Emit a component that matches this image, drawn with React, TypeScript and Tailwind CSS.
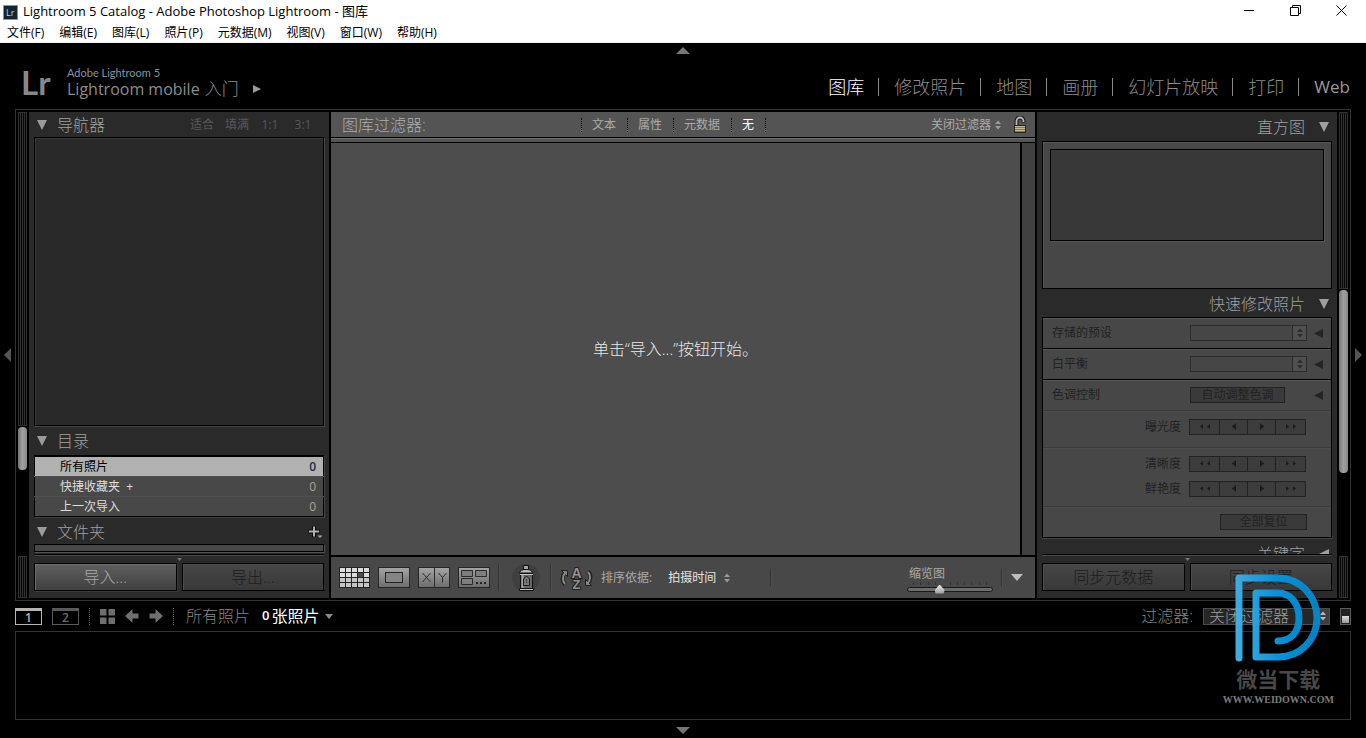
import React from "react";

const stripes =
  "w-[9px] bg-[repeating-linear-gradient(90deg,#303030_0_1px,#080808_1px_2px)] border-y border-[#303030]";

type Dir = "up" | "down" | "left" | "right";

function Tri({ dir, w, h, color = "#8f8f8f" }: { dir: Dir; w: number; h: number; color?: string }) {
  const points: Record<Dir, string> = {
    up: `0,${h} ${w},${h} ${w / 2},0`,
    down: `0,0 ${w},0 ${w / 2},${h}`,
    left: `${w},0 ${w},${h} 0,${h / 2}`,
    right: `0,0 0,${h} ${w},${h / 2}`,
  };
  return (
    <svg width={w} height={h} viewBox={`0 0 ${w} ${h}`} className="shrink-0" aria-hidden="true">
      <polygon points={points[dir]} fill={color} />
    </svg>
  );
}

function UpDown({ color = "#9a9a9a" }: { color?: string }) {
  return (
    <svg width="6" height="10" viewBox="0 0 6 10" className="shrink-0" aria-hidden="true">
      <path d="M0 4L3 0.5L6 4ZM0 6L3 9.5L6 6Z" fill={color} />
    </svg>
  );
}

function Dots({ className = "h-3.5 border-black" }: { className?: string }) {
  return <span className={`w-px border-l border-dotted ${className}`} />;
}

function TitleBar() {
  return (
    <header className="flex h-6 shrink-0 items-center bg-white pr-0.5 pl-[3px] text-black">
      <svg width="15" height="15" viewBox="0 0 15 15" aria-hidden="true">
        <rect width="15" height="15" fill="#7f98a8" />
        <rect x="1" y="1" width="13" height="13" fill="#14242f" />
        <text x="3" y="11" fontSize="9" fill="#b9d3e2" fontFamily="Open Sans, sans-serif">Lr</text>
      </svg>
      <h1 className="ml-[5px] flex-1 truncate text-[13px]">Lightroom 5 Catalog - Adobe Photoshop Lightroom - 图库</h1>
      <button aria-label="最小化" className="flex h-full w-[46px] items-center justify-center pb-1">
        <svg width="11" height="11" viewBox="0 0 11 11"><path d="M0 5.500H10" stroke="#000" /></svg>
      </button>
      <button aria-label="还原" className="flex h-full w-[46px] items-center justify-center pb-1">
        <svg width="11" height="11" viewBox="0 0 11 11" fill="none" stroke="#000">
          <path d="M0.500 2.500H8.500V10.500H0.500ZM2.500 2.500V0.500H10.500V8.500H8.500" />
        </svg>
      </button>
      <button aria-label="关闭" className="flex h-full w-[46px] items-center justify-center pb-1">
        <svg width="11" height="11" viewBox="0 0 11 11" stroke="#000"><path d="M0.500 0.500L10.500 10.500M10.500 0.500L0.500 10.500" /></svg>
      </button>
    </header>
  );
}

const menus = ["文件(F)", "编辑(E)", "图库(L)", "照片(P)", "元数据(M)", "视图(V)", "窗口(W)", "帮助(H)"];

function MenuBar() {
  return (
    <nav className="flex h-[19px] shrink-0 items-center gap-[15px] border-b border-[#f0f0f0] bg-white pl-[7px] text-[12px] leading-4 text-black">
      {menus.map((m) => (
        <button key={m}>{m}</button>
      ))}
    </nav>
  );
}

const modules = ["图库", "修改照片", "地图", "画册", "幻灯片放映", "打印", "Web"];

function ModulePicker() {
  return (
    <div className="flex h-[66px] shrink-0 flex-col text-[#8c8c8c]">
      <button aria-label="隐藏模块选取器" className="mt-1 flex h-2 justify-center">
        <Tri dir="up" w={14} h={7} color="#757575" />
      </button>
      <div className="flex flex-1 items-center justify-between pr-4 pl-[21px]">
        <div className="flex items-center">
          <span className="w-[46px] font-[Lato,sans-serif] text-[33px] leading-8 font-bold text-[#888]">Lr</span>
          <div>
            <p className="font-[Lato,sans-serif] text-[11px] leading-[13px] text-[#8295a3]">Adobe Lightroom 5</p>
            <button className="flex items-center text-[16px] leading-5">
              <span>Lightroom mobile</span>
              <span className="ml-[5px] text-[17px] font-light">入门</span>
              <span className="ml-3.5"><Tri dir="right" w={8} h={8} color="#999" /></span>
            </button>
          </div>
        </div>
        <nav className="flex items-center pt-2.5 text-[18px] leading-6 font-light">
          {modules.map((m, i) => (
            <React.Fragment key={m}>
              {i > 0 && <span className="mr-[15px] ml-3.5 h-[18px] w-px bg-[#8a8a8a]" />}
              <a href="#" className={i === 0 ? "text-white" : m === "Web" ? "text-[17px] font-normal text-[#999]" : ""}>{m}</a>
            </React.Fragment>
          ))}
        </nav>
      </div>
    </div>
  );
}

function LeftPanel() {
  const rows = [
    { name: "所有照片", n: 0 },
    { name: "快捷收藏夹  +", n: 0 },
    { name: "上一次导入", n: 0 },
  ];
  return (
    <aside className="flex w-[300px] shrink-0 flex-col bg-[#2a2a2a] pr-[5px] pl-[5px]">
      <div className="flex h-[25px] shrink-0 items-center pr-[9px] pl-[3px] text-[12px] text-[#585858]">
        <Tri dir="down" w={10} h={10} color="#9b9b9b" />
        <h2 className="ml-2.5 flex-1 text-[16px] font-light text-[#a0a0a0]">导航器</h2>
        <div className="flex gap-[11px]">
          <button>适合</button>
          <button>填满</button>
          <button className="w-5">1:1</button>
          <button className="w-6">3:1</button>
        </div>
      </div>
      <div className="min-h-0 flex-1 border border-black bg-[#292929] shadow-[1px_1px_0_#444,inset_1px_1px_0_#373737]" />
      <div className="flex h-[29px] shrink-0 items-center pt-px pl-[3px]">
        <Tri dir="down" w={10} h={10} color="#9b9b9b" />
        <h2 className="ml-2.5 text-[16px] font-light text-[#a0a0a0]">目录</h2>
      </div>
      <table className="w-full shrink-0 border-collapse border border-t-2 border-black bg-[#484848] text-[12px] leading-[19px] shadow-[1px_1px_0_#444]">
        <tbody>
          {rows.map((r, i) => (
            <tr key={r.name} className={i === 0 ? "bg-[#b1b1b1] text-black" : "border-t border-[#505050] text-[#dedede]"}>
              <td className="whitespace-pre pl-[25px]">{r.name}</td>
              <td className={`pr-[7px] text-right ${i === 0 ? "font-semibold text-[#13304c]" : "text-[#aaa28f]"}`}>{r.n}</td>
            </tr>
          ))}
        </tbody>
      </table>
      <div className="flex h-[27px] shrink-0 items-center pt-0.5 pl-[3px]">
        <Tri dir="down" w={10} h={10} color="#9b9b9b" />
        <h2 className="ml-2.5 flex-1 text-[16px] font-light text-[#a0a0a0]">文件夹</h2>
        <button aria-label="添加文件夹">
          <svg width="17" height="14" viewBox="0 0 17 14">
            <path d="M7 1V12M1.500 6.500H12.500" stroke="#0a0a0a" strokeWidth="4" />
            <path d="M7 1.500V11.500M2 6.500H12" stroke="#b0b0b0" strokeWidth="2" />
            <path d="M10.500 10.500H15.500L13 13Z" fill="#aaa" />
          </svg>
        </button>
      </div>
      <div className="h-2 shrink-0 border border-black bg-[#484848] shadow-[1px_1px_0_#505050]" />
      <PanelFoot>
        <button className="flex-1 border border-black bg-linear-to-b from-[#606060] to-[#404040] text-[#a8a8a8] shadow-[inset_1px_1px_0_#6d6d6d,1px_1px_0_#3b3b3b]">导入...</button>
        <button className="flex-1 border border-black bg-linear-to-b from-[#474747] to-[#383838] text-[#1c1c1c] shadow-[inset_1px_1px_0_#4c4c4c]">导出...</button>
      </PanelFoot>
    </aside>
  );
}

function PanelFoot({ children }: { children: React.ReactNode }) {
  return (
    <div className="mt-0.5 shrink-0">
      <div className="h-0.5 border-t border-b border-t-black border-b-[#484848]" />
      <div className="flex h-[7px] items-center justify-center"><Tri dir="down" w={5} h={3} color="#777" /></div>
      <div className="mb-[7px] flex h-7 gap-[5px] text-[16px] leading-6 font-light">{children}</div>
    </div>
  );
}

function LockIcon() {
  return (
    <svg width="14" height="18" viewBox="0 0 14 18" aria-hidden="true">
      <path d="M3.500 9V5A3.500 3.500 0 0 1 10.500 5V6.500" fill="none" stroke="#1d1d1d" strokeWidth="4" />
      <path d="M3.500 9V5A3.500 3.500 0 0 1 10.500 5V6" fill="none" stroke="#b9b9b9" strokeWidth="1.800" />
      <rect x="1" y="9" width="12" height="8" fill="#29251b" />
      <path d="M2 10.500H12M2 12.500H12M2 14.500H12" stroke="#c5b98f" />
      <path d="M2 11.500H12M2 13.500H12M2 15.500H12" stroke="#857b5c" />
    </svg>
  );
}

function FilterBar() {
  const items = ["文本", "属性", "元数据", "无"];
  return (
    <div className="flex h-[25px] shrink-0 items-center bg-[#545454] pr-2 pl-[11px] text-[12px] text-[#aaa]">
      <h2 className="flex-1 text-[16px] font-light text-[#acacac]">图库过滤器:</h2>
      <div className="mr-[22px] flex items-center gap-2.5">
        <Dots />
        {items.map((t) => (
          <React.Fragment key={t}>
            <button className={t === "无" ? "mr-px text-white" : "mr-px"}>{t}</button>
            <Dots />
          </React.Fragment>
        ))}
      </div>
      <div className="flex flex-1 items-center justify-end">
        <button className="flex items-center gap-1">关闭过滤器<UpDown /></button>
        <button aria-label="锁定过滤器" className="ml-3"><LockIcon /></button>
      </div>
    </div>
  );
}

function ViewIcon({ kind }: { kind: "grid" | "loupe" | "compare" | "survey" }) {
  if (kind === "grid") {
    const cells: React.ReactNode[] = [];
    for (let r = 0; r < 4; r++)
      for (let c = 0; c < 5; c++)
        cells.push(<rect key={`${r}-${c}`} x={1 + c * 6} y={1 + r * 5} width="5" height="4" fill={r === 1 && c === 3 ? "#4c4c4c" : r < 2 ? "#dcdcdc" : "#c4c4c4"} />);
    return <svg width="31" height="21" viewBox="0 0 31 21"><rect width="31" height="21" fill="#222" />{cells}</svg>;
  }
  return (
    <svg width="32" height="21" viewBox="0 0 32 21" fill="none">
      <defs>
        <linearGradient id={`face-${kind}`} x2="0" y2="1"><stop stopColor="#a5a5a5" /><stop offset="1" stopColor="#6c6c6c" /></linearGradient>
      </defs>
      <rect x="0.500" y="0.500" width="31" height="20" fill={`url(#face-${kind})`} stroke="#262626" />
      {kind === "loupe" && <rect x="7.500" y="5.500" width="17" height="10" fill="#858585" stroke="#222" />}
      {kind === "compare" && <path d="M16.500 1V20M4.500 6L12.500 15M12.500 6L4.500 15M20.500 6L24.500 10.500L28.500 6M24.500 10.500V15.500" stroke="#2b2b2b" />}
      {kind === "survey" && (
        <>
          <path d="M3.500 3.500H14.500V9.500H3.500ZM17.500 3.500H28.500V9.500H17.500ZM3.500 11.500H14.500V17.500H3.500Z" fill="#7e7e7e" stroke="#2b2b2b" />
          <path d="M18 16H20M22 16H24M26 16H28" stroke="#222" strokeWidth="2" />
        </>
      )}
    </svg>
  );
}

function SprayIcon() {
  return (
    <svg width="28" height="30" viewBox="0 0 28 30" aria-hidden="true">
      <circle cx="14" cy="15" r="14" fill="#3f3f3f" />
      <path d="M11.500 2.500H16.500V6.500H11.500Z" fill="#a4a4a4" stroke="#111" />
      <path d="M7.500 10C8 7.500 10 6.500 14 6.500C18 6.500 20 7.500 20.500 10Z" fill="#bdbdbd" stroke="#111" />
      <path d="M8.500 10.500H20.500V25.500H8.500Z" fill="#686868" stroke="#111" />
      <path d="M10.500 11V25" stroke="#a2a2a2" strokeWidth="2" />
      <path d="M11.500 16L14.500 13L17.500 16V22.500H11.500Z" fill="#777" stroke="#1c1c1c" />
      <path d="M14.500 16V20" stroke="#444" />
      <path d="M7.500 25.500H21.500V27.500H7.500Z" fill="#c2c2c2" stroke="#111" />
      <path d="M8 11.500H21" stroke="#c4c4c4" />
    </svg>
  );
}

function SortIcon() {
  return (
    <svg width="33" height="24" viewBox="0 0 33 24" fill="none" aria-hidden="true">
      <g stroke="#202020" strokeWidth="4"><path d="M5 18.500C1.500 15 2 9.500 5.500 6M28 5.500C31.500 9 31 14.500 27.500 18" /></g>
      <path d="M1.500 4.500H7.500V10.500ZM25.500 13.500V19.500H31.500Z" fill="#848484" stroke="#202020" />
      <g stroke="#8a8a8a" strokeWidth="2"><path d="M5 18C2 15 2.500 9.500 5.500 6.500M28 6C31 9 30.500 14.500 27.500 17.500" /></g>
      <g fontFamily="Liberation Sans, sans-serif" fontWeight="700" fill="#929292" stroke="#202020" strokeWidth="2" paintOrder="stroke" textAnchor="middle">
        <text x="16.500" y="11.500" fontSize="14">A</text>
        <text x="16.500" y="22.500" fontSize="13">Z</text>
      </g>
    </svg>
  );
}

function ToolSep() {
  return <span className="h-[27px] w-0.5 border-r border-l border-r-[#505050] border-l-[#353535]" />;
}

function Toolbar() {
  return (
    <div className="flex h-[41px] shrink-0 items-center bg-[#484848] pl-2 text-[12px] text-[#a8a8a8]">
      <div className="flex items-center gap-2">
        <button aria-label="网格视图"><ViewIcon kind="grid" /></button>
        <button aria-label="放大视图"><ViewIcon kind="loupe" /></button>
        <button aria-label="比较视图"><ViewIcon kind="compare" /></button>
        <button aria-label="筛选视图"><ViewIcon kind="survey" /></button>
        <ToolSep />
      </div>
      <button aria-label="喷涂工具" className="mr-2.5 ml-3"><SprayIcon /></button>
      <ToolSep />
      <button aria-label="排序方向" className="ml-2"><SortIcon /></button>
      <span className="ml-2">排序依据:</span>
      <button className="ml-4 flex items-center gap-2 text-[#e4e4e4]">拍摄时间<UpDown /></button>
      <span className="ml-10"><ToolSep /></span>
      <div className="ml-auto flex w-[86px] flex-col pt-1">
        <label htmlFor="thumbs" className="ml-0.5 leading-4">缩览图</label>
        <svg width="86" height="3" viewBox="0 0 86 3" aria-hidden="true">
          <path d="M6.500 0V3M13.500 0V3M21.500 0V3M28.500 0V3M43.500 0V3M50.500 0V3M57.500 0V3M64.500 0V3M72.500 0V3M79.500 0V3" stroke="#333" />
        </svg>
        <input
          id="thumbs"
          type="range"
          min="0"
          max="100"
          defaultValue="36"
          className="h-[9px] w-full appearance-none bg-transparent [&::-webkit-slider-runnable-track]:h-[5px] [&::-webkit-slider-runnable-track]:rounded-full [&::-webkit-slider-runnable-track]:border [&::-webkit-slider-runnable-track]:border-[#1a1a1a] [&::-webkit-slider-runnable-track]:bg-[#6c6c6c] [&::-webkit-slider-thumb]:-mt-[3px] [&::-webkit-slider-thumb]:h-[9px] [&::-webkit-slider-thumb]:w-[10px] [&::-webkit-slider-thumb]:appearance-none [&::-webkit-slider-thumb]:bg-linear-to-b [&::-webkit-slider-thumb]:from-[#eee] [&::-webkit-slider-thumb]:to-[#999] [&::-webkit-slider-thumb]:[clip-path:polygon(50%_0,100%_60%,90%_100%,10%_100%,0_60%)]"
        />
      </div>
      <span className="ml-2"><ToolSep /></span>
      <button aria-label="工具栏选项" className="mr-3 ml-2"><Tri dir="down" w={12} h={7} color="#bcbcbc" /></button>
    </div>
  );
}

function Center() {
  return (
    <main className="mx-0.5 flex min-w-0 flex-1 flex-col">
      <FilterBar />
      <div className="h-1.5 shrink-0 border-y border-black bg-[#545454] shadow-[inset_0_1px_0_#6d6d6d]" />
      <div className="flex min-h-0 flex-1">
        <div className="flex flex-1 items-center justify-center bg-[#4d4d4d] text-[16px] font-light text-[#e8e8e8]">
          <p>单击“导入...”按钮开始。</p>
        </div>
        <div className="ml-0.5 w-[13px] bg-[#414141]" />
      </div>
      <div className="h-0.5 shrink-0 bg-black" />
      <Toolbar />
    </main>
  );
}

function Preset({ label, id }: { label: string; id: string }) {
  return (
    <div className="flex h-[31px] items-center border-b border-black pr-2 pl-[9px] shadow-[inset_0_1px_0_#565656]">
      <label htmlFor={id} className="flex-1">{label}</label>
      <div className="mr-[7px] flex h-4 w-[117px] border border-[#2c2c2c]">
        <select id={id} disabled className="w-[102px] appearance-none border-r border-[#2c2c2c] bg-[#464646]"><option></option></select>
        <span className="flex flex-1 items-center justify-center bg-[#505050]"><UpDown color="#2c2c2c" /></span>
      </div>
      <button aria-label={`展开${label}`}><Tri dir="left" w={9} h={9} color="#252525" /></button>
    </div>
  );
}

function Stepper({ label }: { label: string }) {
  const cell = "flex items-center justify-center gap-1";
  return (
    <div className="flex h-[25px] items-center justify-end pr-[25px]">
      <span className="mr-2">{label}</span>
      <div className="grid h-4 w-[117px] grid-cols-[30px_28px_28px_29px] divide-x divide-[#222] border border-[#222] bg-[#3c3c3c]">
        <button aria-label={`${label}大幅降低`} className={cell}><Tri dir="left" w={3} h={5} color="#1c1c1c" /><Tri dir="left" w={3} h={5} color="#1c1c1c" /></button>
        <button aria-label={`${label}降低`} className={cell}><Tri dir="left" w={4} h={7} color="#1c1c1c" /></button>
        <button aria-label={`${label}提高`} className={cell}><Tri dir="right" w={4} h={7} color="#1c1c1c" /></button>
        <button aria-label={`${label}大幅提高`} className={cell}><Tri dir="right" w={3} h={5} color="#1c1c1c" /><Tri dir="right" w={3} h={5} color="#1c1c1c" /></button>
      </div>
    </div>
  );
}

function RightHead({ title, dir = "down" }: { title: string; dir?: Dir }) {
  return (
    <div className="flex h-7 shrink-0 items-center justify-end gap-3.5 pt-px pr-[3px]">
      <h2 className="text-[16px] font-light text-[#a0a0a0]">{title}</h2>
      <Tri dir={dir} w={10} h={10} color="#a0a0a0" />
    </div>
  );
}

function RightPanel() {
  return (
    <aside className="flex w-[300px] shrink-0 flex-col bg-[#2a2a2a] px-[5px]">
      <div className="flex min-h-0 flex-1 flex-col overflow-hidden">
        <RightHead title="直方图" />
        <div className="mt-px h-[148px] shrink-0 border border-black bg-[#474747] p-[7px] shadow-[inset_1px_1px_0_#565656]">
          <div className="h-[92px] border border-black bg-[#383838] shadow-[1px_1px_0_#565656]" />
        </div>
        <RightHead title="快速修改照片" />
        <div className="shrink-0 border border-black bg-[#474747] text-[12px] leading-4 text-[#222]">
          <Preset label="存储的预设" id="preset" />
          <Preset label="白平衡" id="wb" />
          <div className="flex h-[31px] items-center border-b border-[#3c3c3c] pr-2 pl-[9px] shadow-[inset_0_1px_0_#565656]">
            <span className="flex-1">色调控制</span>
            <button className="mr-[29px] h-4 w-[95px] border border-[#222] bg-[#3a3a3a] leading-[14px]">自动调整色调</button>
            <button aria-label="展开色调控制"><Tri dir="left" w={9} h={9} color="#252525" /></button>
          </div>
          <div className="h-[37px] border-b border-[#3c3c3c] pt-[3px] shadow-[inset_0_1px_0_#4c4c4c]"><Stepper label="曝光度" /></div>
          <div className="h-[59px] border-b border-[#3c3c3c] pt-[3px] shadow-[inset_0_1px_0_#4c4c4c]">
            <Stepper label="清晰度" />
            <Stepper label="鲜艳度" />
          </div>
          <div className="flex h-[30px] items-center justify-end pr-6 shadow-[inset_0_1px_0_#4c4c4c]">
            <button className="h-4 w-[87px] border border-[#222] bg-[#3a3a3a] leading-[14px]">全部复位</button>
          </div>
        </div>
        <div className="h-px shrink-0 bg-[#444]" />
        <RightHead title="关键字" dir="left" />
      </div>
      <div className="-mt-0.5 shrink-0">
        <PanelFoot>
          <button className="flex-1 border border-black bg-linear-to-b from-[#474747] to-[#383838] text-[#1c1c1c] shadow-[inset_1px_1px_0_#4c4c4c]">同步元数据</button>
          <button className="flex-1 border border-black bg-linear-to-b from-[#474747] to-[#383838] text-[#1c1c1c] shadow-[inset_1px_1px_0_#4c4c4c]">同步设置</button>
        </PanelFoot>
      </div>
    </aside>
  );
}

function Screen({ n, active }: { n: number; active?: boolean }) {
  return (
    <button className={`h-[17px] w-[27px] border border-t-[3px] text-[12px] leading-[14px] font-semibold ${active ? "border-[#b5b5b5] text-[#b5b5b5]" : "border-[#5a5a5a] text-[#6c6c6c]"}`}>
      {n}
    </button>
  );
}

function StripBar() {
  return (
    <div className="flex h-[30px] shrink-0 items-center px-[15px] text-[16px] font-light text-[#858585]">
      <div className="flex items-center gap-2.5">
        <Screen n={1} active />
        <Screen n={2} />
        <Dots className="h-[17px] border-[#666]" />
        <button aria-label="网格">
          <svg width="15" height="15" viewBox="0 0 15 15" fill="#6e6e6e"><path d="M0 0H6.500V6.500H0ZM8.500 0H15V6.500H8.500ZM0 8.500H6.500V15H0ZM8.500 8.500H15V15H8.500Z" /></svg>
        </button>
        <button aria-label="后退">
          <svg width="14" height="14" viewBox="0 0 14 14" fill="#6e6e6e"><path d="M0 7L7.500 0V4.500H13.500V9.500H7.500V14Z" /></svg>
        </button>
        <button aria-label="前进">
          <svg width="14" height="14" viewBox="0 0 14 14" fill="#6e6e6e"><path d="M14 7L6.500 0V4.500H0.500V9.500H6.500V14Z" /></svg>
        </button>
        <Dots className="h-[17px] border-[#666]" />
      </div>
      <span className="ml-3 leading-5">所有照片</span>
      <button className="ml-3 flex items-center text-white">
        <span className="mr-0.5 text-[13px] font-semibold">0</span>
        <span className="mr-1.5 text-[16px] leading-5 font-normal">张照片</span>
        <Tri dir="down" w={8} h={5} color="#8a8a8a" />
      </button>
      <label htmlFor="filter" className="mr-2.5 ml-auto">过滤器:</label>
      <div className="flex h-[17px] w-[127px] border border-[#4c4c4c] bg-[#262626]">
        <select id="filter" className="min-w-0 flex-1 appearance-none bg-transparent pl-[5px] leading-[15px] font-light text-[#999]"><option>关闭过滤器</option></select>
        <span className="flex w-[13px] items-center justify-center bg-[#3e3e3e]"><UpDown color="#b5b5b5" /></span>
      </div>
      <button aria-label="过滤器开关" className="ml-2.5 flex h-[17px] w-[11px] items-end border border-[#5b5b5b] bg-[#222] p-px">
        <span className="h-[7px] w-full bg-linear-to-b from-[#ddd] to-[#999]" />
      </button>
    </div>
  );
}

function Watermark() {
  return (
    <div className="pointer-events-none absolute right-8 bottom-[31px] flex flex-col items-center">
      <svg width="86" height="88" viewBox="0 0 86 88" fill="none" aria-hidden="true">
        <defs>
          <linearGradient id="brand" gradientUnits="userSpaceOnUse" x1="0" y1="50" x2="86" y2="40">
            <stop stopColor="#45b5ec" /><stop offset="0.550" stopColor="#0096e0" /><stop offset="1" stopColor="#0786c8" />
          </linearGradient>
        </defs>
        <path
          d="M4 84V4H43C65 4 82 22 82 44S65 83 43 83H21V19H43C56 19 64 30 64 44S56 67 43 67"
          stroke="url(#brand)" strokeWidth="7" strokeLinecap="round" strokeLinejoin="round" opacity="0.950"
        />
      </svg>
      <p className="mt-[5px] text-[21px] leading-6 font-bold text-[#484848]">微当下载</p>
      <p className="mt-0.5 font-[Liberation_Serif,serif] text-[10px] leading-[14px] font-bold text-[#7c7c7c]">WWW.WEIDOWN.COM</p>
    </div>
  );
}

export default function App() {
  return (
    <div className="relative flex h-screen min-h-[640px] min-w-[1100px] flex-col overflow-hidden bg-black font-[Open_Sans,Noto_Sans_CJK_SC,sans-serif]">
      <TitleBar />
      <MenuBar />
      <ModulePicker />
      <div className="flex min-h-0 flex-1">
        <button aria-label="隐藏左侧面板" className="flex w-[15px] items-center justify-center"><Tri dir="left" w={7} h={14} color="#555" /></button>
        <div className="flex min-w-0 flex-1 border border-[#333] p-0.5">
          <div className="mr-0.5 flex flex-col">
            <div className={`min-h-0 flex-1 ${stripes}`} />
            <div className="mt-px h-[43px] rounded-sm bg-linear-to-r from-[#777] via-[#a0a0a0] to-[#888]" />
            <div className="h-[86px]" />
            <div className={`h-[42px] ${stripes}`} />
          </div>
          <LeftPanel />
          <Center />
          <RightPanel />
          <div className="ml-0.5 flex flex-col">
            <div className={`min-h-0 flex-1 ${stripes}`} />
            <div className="mt-px h-[183px] rounded-sm bg-linear-to-r from-[#777] via-[#a0a0a0] to-[#888]" />
            <div className="h-[83px]" />
            <div className={`h-[42px] ${stripes}`} />
          </div>
        </div>
        <button aria-label="隐藏右侧面板" className="flex w-[15px] items-center justify-center"><Tri dir="right" w={7} h={14} color="#555" /></button>
      </div>
      <StripBar />
      <section aria-label="胶片显示窗格" className="mx-[15px] h-[89px] shrink-0 border border-[#333]" />
      <button aria-label="隐藏胶片显示窗格" className="flex h-[18px] shrink-0 items-center justify-center pt-0.5"><Tri dir="down" w={14} h={7} color="#757575" /></button>
      <Watermark />
    </div>
  );
}
